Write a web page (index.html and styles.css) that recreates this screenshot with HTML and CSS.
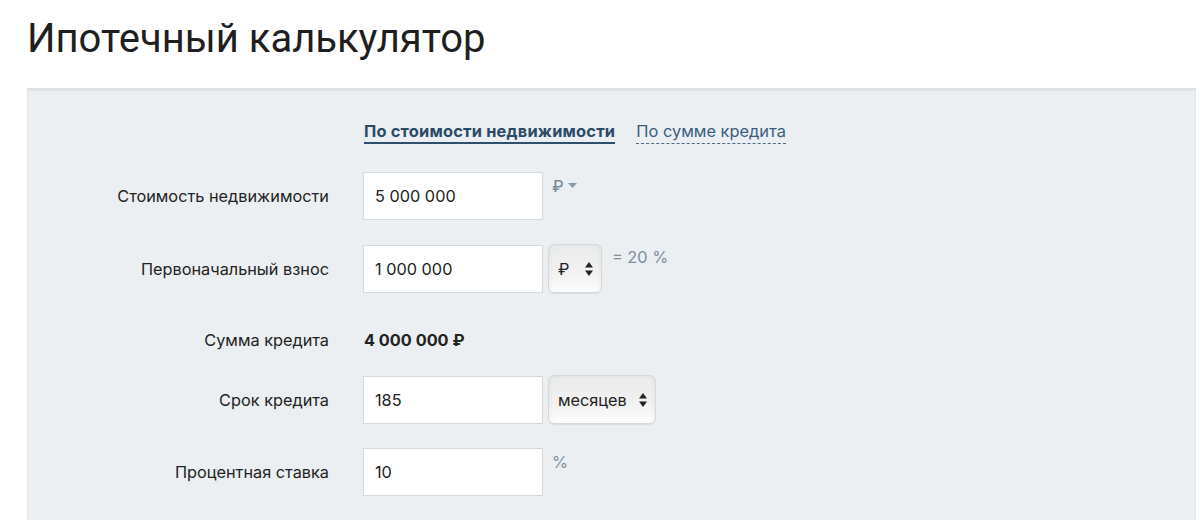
FILE: index.html
```html
<!DOCTYPE html>
<html lang="ru">
<head>
<meta charset="utf-8">
<title>Ипотечный калькулятор</title>
<link rel="stylesheet" href="styles.css">
</head>
<body>
<h1 class="title">Ипотечный калькулятор</h1>
<div class="panel">
  <div class="tabs">
    <span class="tab tab-active">По стоимости недвижимости</span>
    <span class="tab tab-link">По сумме кредита</span>
  </div>

  <div class="row">
    <div class="label">Стоимость недвижимости</div>
    <div class="input">5 000 000</div>
    <div class="suffix suffix-cur">₽ <svg class="caret" width="9" height="5" viewBox="0 0 9 5"><path d="M0 0h9L4.5 5z" fill="#8799aa"/></svg></div>
  </div>

  <div class="row">
    <div class="label">Первоначальный взнос</div>
    <div class="input">1 000 000</div>
    <div class="select select-sm"><span>₽</span><svg class="updown" width="8" height="14" viewBox="0 0 8 14"><path d="M4 0L8 5.5H0z M4 14L0 8.5H8z" fill="#222"/></svg></div>
    <div class="suffix suffix-pct">= 20 %</div>
  </div>

  <div class="row row-sum">
    <div class="label">Сумма кредита</div>
    <div class="sum">4 000 000 ₽</div>
  </div>

  <div class="row">
    <div class="label">Срок кредита</div>
    <div class="input">185</div>
    <div class="select select-lg"><span>месяцев</span><svg class="updown" width="8" height="14" viewBox="0 0 8 14"><path d="M4 0L8 5.5H0z M4 14L0 8.5H8z" fill="#222"/></svg></div>
  </div>

  <div class="row">
    <div class="label">Процентная ставка</div>
    <div class="input">10</div>
    <div class="suffix suffix-small">%</div>
  </div>
</div>
</body>
</html>
```

FILE: styles.css
```css
html, body {
  margin: 0;
  padding: 0;
  background: #ffffff;
}
body {
  font-family: Inter, "Liberation Sans", Arial, sans-serif;
  color: #222222;
  overflow: hidden;
  height: 520px;
}
.title {
  font-family: Roboto, "Liberation Sans", Arial, sans-serif;
  font-weight: 400;
  font-size: 40px;
  line-height: 48px;
  margin: 15px 0 0 27px;
  color: #1f1f1f;
}
.panel {
  margin: 25px 4px 0 27px;
  background: #ebeff1;
  border-top: 3px solid #dde4e7;
  border-left: 1px solid #e2e8ea;
  border-right: 1px solid #e2e8ea;
  height: 432px;
  box-sizing: border-box;
  overflow: hidden;
}
.tabs {
  margin: 30px 0 0 336px;
  display: flex;
  gap: 21px;
  font-size: 16.4px;
  line-height: 20px;
}
.tab {
  padding-bottom: 1px;
}
.tab-active {
  font-weight: 700;
  letter-spacing: 0.2px;
  color: #2b4a68;
  border-bottom: 2px solid #2e4f6e;
}
.tab-link {
  color: #3a5d7f;
  border-bottom: 1px dashed #4a6b8a;
  padding-bottom: 2px;
}
.row {
  display: flex;
  align-items: center;
  margin-top: 24px;
}
.tabs + .row {
  margin-top: 28px;
}
.label {
  width: 301px;
  padding-right: 34px;
  text-align: right;
  font-size: 16.3px;
  line-height: 20px;
  flex-shrink: 0;
}
.input {
  width: 180px;
  height: 48px;
  box-sizing: border-box;
  background: #ffffff;
  border: 1px solid #d3d9dd;
  padding: 0 11px;
  display: flex;
  align-items: center;
  font-size: 16.3px;
  flex-shrink: 0;
}
.suffix {
  align-self: flex-start;
  color: #7d8fa1;
  font-size: 16.3px;
  line-height: 20px;
}
.suffix-cur {
  margin: 4px 0 0 9px;
  display: flex;
  align-items: center;
  gap: 4px;
  color: #7a8c9e;
  font-weight: 500;
}
.caret {
  margin-top: -2px;
}
.suffix-pct {
  margin: 3px 0 0 10px;
  color: #7b8d9f;
}
.suffix-small {
  margin: 4px 0 0 9px;
}
.select {
  margin-left: 5px;
  height: 49px;
  box-sizing: border-box;
  border-radius: 6px;
  background: linear-gradient(#e9eaea, #f1f1f1 55%, #fdfdfd);
  border: 1px solid #d6d9db;
  box-shadow: inset 0 -1px 1px rgba(255,255,255,0.9), 0 1px 1px rgba(0,0,0,0.08), inset 2px 0 3px rgba(0,0,0,0.04), inset -2px 0 3px rgba(0,0,0,0.04);
  display: flex;
  align-items: center;
  justify-content: space-between;
  padding: 0 8px 0 9px;
  font-size: 16.3px;
  color: #222;
  flex-shrink: 0;
}
.select-sm {
  width: 54px;
}
.select-lg {
  width: 108px;
}
.row-sum {
  margin-top: 35px;
  height: 24px;
}
.row-sum + .row {
  margin-top: 23px;
}
.sum {
  font-weight: 700;
  font-size: 16.3px;
  padding-left: 1px;
}
```
